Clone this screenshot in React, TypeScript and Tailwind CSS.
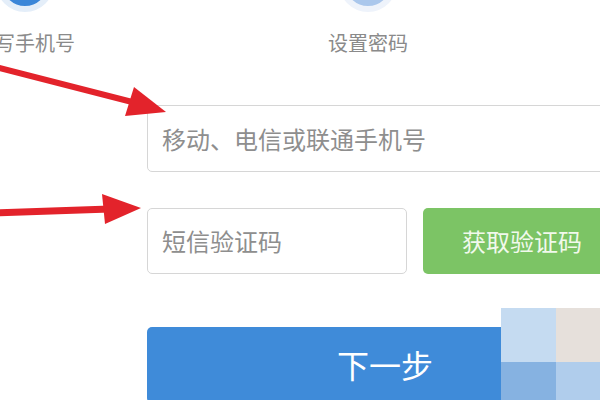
const CJK = "font-['Microsoft_YaHei','Noto_Sans_CJK_SC',sans-serif]";

function Arrows() {
  return (
    <svg className="pointer-events-none absolute left-0 top-0" width="600" height="400" viewBox="0 0 600 400">
      <line x1="-4" y1="67" x2="140" y2="104" stroke="#e3232b" strokeWidth="6" strokeLinecap="round" />
      <polygon points="134,87 166,112 125,116" fill="#e3232b" />
      <line x1="-4" y1="213" x2="110" y2="209" stroke="#e3232b" strokeWidth="7" strokeLinecap="round" />
      <polygon points="102,194 141,208 105,224" fill="#e3232b" />
    </svg>
  );
}

function Step({ label, active }: { label: string; active: boolean }) {
  return (
    <div className="flex w-[100px] flex-col items-center">
      <div
        className={`mt-[-46px] h-[58px] w-[58px] rounded-full border-[6px] ${
          active ? "border-[#e4eef9] bg-[#3b86d8]" : "border-[#eef3fb] bg-[#aac7ec]"
        }`}
      />
      <div className="mt-[21px] text-[20px] leading-[20px] text-[#8a8a8a]">{label}</div>
    </div>
  );
}

export default function App() {
  return (
    <div className={`relative h-[400px] w-[600px] overflow-hidden bg-white ${CJK}`}>
      <div className="flex gap-[243px]">
        <div className="ml-[-25px]">
          <Step label="填写手机号" active />
        </div>
        <Step label="设置密码" active={false} />
      </div>

      <div className="ml-[147px] mt-[52px] flex flex-col">
        <div className="flex h-[67px] w-[470px] shrink-0 items-center rounded-[5px] border border-[#d6d6d6] pl-[14px] text-[24px] text-[#8e8e8e]">
          移动、电信或联通手机号
        </div>
        <div className="mt-[36px] flex gap-[16px]">
          <div className="flex h-[66px] w-[260px] shrink-0 items-center rounded-[5px] border border-[#d6d6d6] pl-[14px] text-[24px] text-[#8e8e8e]">
            短信验证码
          </div>
          <div className="flex h-[66px] w-[200px] shrink-0 items-center rounded-[5px] bg-[#7cc465] pl-[39px] text-[24px] text-[#f1f9ec]">
            获取验证码
          </div>
        </div>
        <div className="mt-[53px] flex h-[76px] w-[476px] shrink-0 items-start justify-center rounded-[5px] bg-[#3f8bd9] pt-[17px] text-[32px] leading-[40px] text-white">
          下一步
        </div>
      </div>

      <div className="absolute left-[501px] top-[308px] grid grid-cols-[55px_44px] grid-rows-[54px_40px]">
        <div className="bg-[#c5dbf1]" />
        <div className="bg-[#e6e0db]" />
        <div className="bg-[#86b2e1]" />
        <div className="bg-[#b0cdec]" />
      </div>

      <Arrows />
    </div>
  );
}
